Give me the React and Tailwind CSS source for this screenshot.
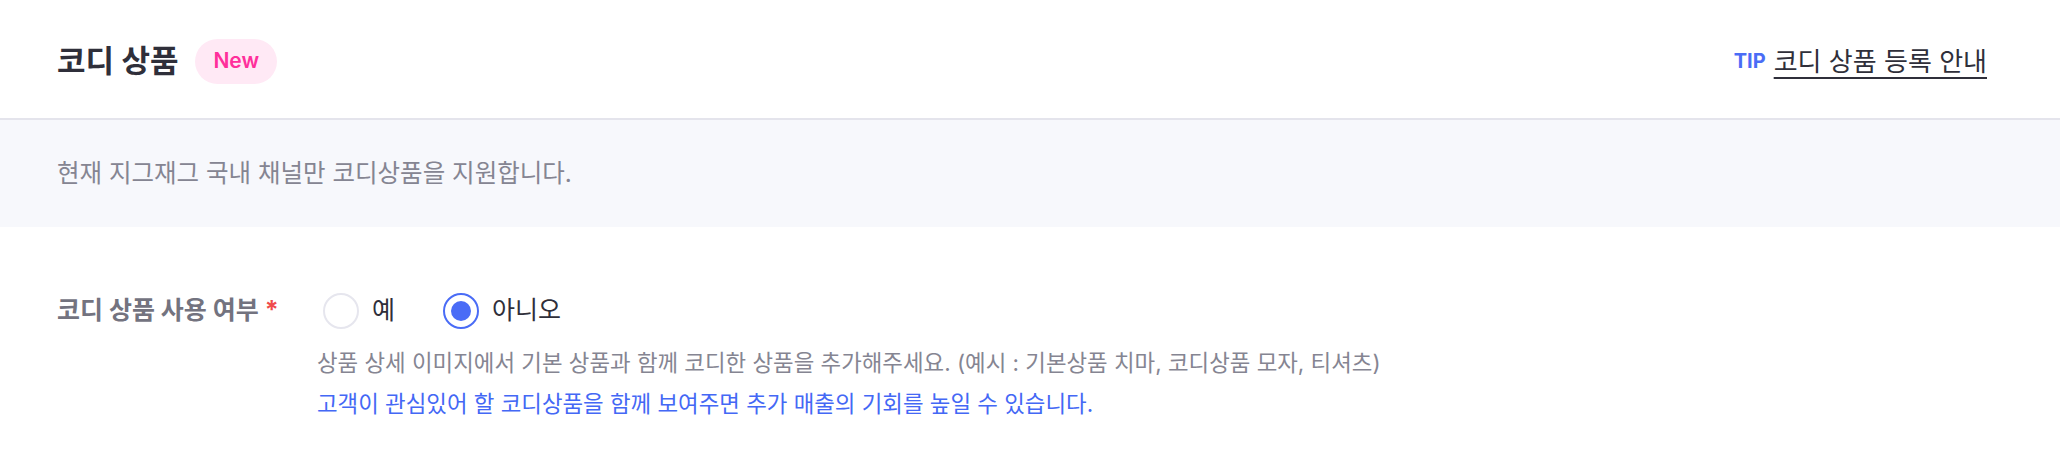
import React from 'react';

const font = { fontFamily: 'Inter, "Noto Sans CJK KR", sans-serif' };

const Radio = ({ checked, label }) => (
  <label className="flex items-center gap-[13px] cursor-pointer">
    <span
      className={
        'flex h-[36px] w-[36px] items-center justify-center rounded-full border-2 bg-white ' +
        (checked ? 'border-[#4a6cf6]' : 'border-[#e6e6ee]')
      }
    >
      {checked && <span className="h-[20px] w-[20px] rounded-full bg-[#4a6cf6]" />}
    </span>
    <span className="text-[25px] text-[#2f2f3a]">{label}</span>
  </label>
);

export default function App() {
  return (
    <div className="h-[476px] w-full bg-white" style={font}>
      <div className="flex h-[120px] items-center justify-between border-b-2 border-[#e4e4ec] px-[57px] pt-[4px]">
        <div className="flex items-center gap-[17px]">
          <h1 className="text-[31px] font-bold text-[#2f2f3a]">코디 상품</h1>
          <span className="flex h-[45px] items-center rounded-full bg-[#ffe9f5] px-[18px] text-[21px] font-semibold text-[#ff2f9b]">
            New
          </span>
        </div>
        <div className="flex items-center gap-[8px] mr-[16px]">
          <span className="text-[20px] font-bold text-[#4a6cf6]">TIP</span>
          <a className="text-[26px] text-[#2f2f3a] underline decoration-[2px] underline-offset-[6px]">
            코디 상품 등록 안내
          </a>
        </div>
      </div>

      <div className="flex h-[107px] items-center bg-[#f7f8fc] px-[57px]">
        <p className="text-[24.5px] text-[#858592]">현재 지그재그 국내 채널만 코디상품을 지원합니다.</p>
      </div>

      <div className="flex px-[57px] pt-[64px]">
        <div className="flex h-[40px] w-[260px] items-center">
          <span className="text-[25px] font-bold text-[#73737f]">코디 상품 사용 여부</span>
          <span className="ml-[6px] text-[25px] font-bold text-[#f04b4b]">*</span>
        </div>
        <div className="flex flex-col">
          <div className="ml-[6px] flex h-[40px] items-center gap-[48px]">
            <Radio label="예" />
            <Radio checked label="아니오" />
          </div>
          <p className="mt-[16px] text-[22.4px] leading-[32px] text-[#858592]">
            상품 상세 이미지에서 기본 상품과 함께 코디한 상품을 추가해주세요. (예시 : 기본상품 치마, 코디상품 모자, 티셔츠)
          </p>
          <p className="mt-[9px] text-[22.4px] leading-[32px] text-[#4468f5]">
            고객이 관심있어 할 코디상품을 함께 보여주면 추가 매출의 기회를 높일 수 있습니다.
          </p>
        </div>
      </div>
    </div>
  );
}
